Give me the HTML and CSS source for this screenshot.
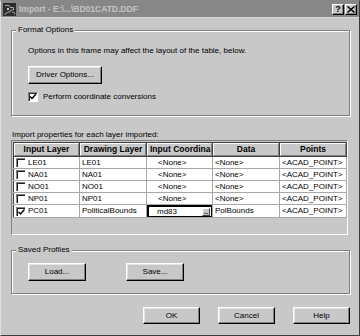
FILE: index.html
```html
<!DOCTYPE html>
<html>
<head>
<meta charset="utf-8">
<title>Import</title>
<link rel="stylesheet" href="styles.css">
</head>
<body>
<div class="dialog">
  <div class="titlebar">
    <svg class="app-icon" viewBox="0 0 13 13" width="13" height="13">
      <rect x="0" y="0" width="13" height="13" fill="#2e2e2e"/>
      <path d="M2 2.5h4l1 2h3.5v2.5H8l-1 2H4.5L3 11H1.5" fill="none" stroke="#a9a9a9" stroke-width="1"/>
      <path d="M9 9.5h2.5v2" fill="none" stroke="#8a8a8a" stroke-width="1"/>
      <rect x="4" y="5" width="2" height="2" fill="#cfcfcf"/>
    </svg>
    <span class="title">Import - E:\...\BD01CATD.DDF</span>
    <span class="tb-btns">
      <span class="tb-btn">?</span>
      <span class="tb-btn"><svg viewBox="0 0 8 7" width="8" height="7"><path d="M0.5 0.5l7 6M7.5 0.5l-7 6" stroke="#000" stroke-width="1.4"/></svg></span>
    </span>
  </div>

  <div class="content">
    <fieldset class="group format">
      <legend>Format Options</legend>
      <p class="hint">Options in this frame may affect the layout of the table, below.</p>
      <button class="btn driver">Driver Options...</button>
      <div class="check">
        <span class="cb cb-checked"><svg viewBox="0 0 8 8" width="8" height="8"><path d="M1 3.5l2 2 4-4.5" fill="none" stroke="#000" stroke-width="1.5"/></svg></span>
        <span>Perform coordinate conversions</span>
      </div>
    </fieldset>

    <p class="table-label">Import properties for each layer imported:</p>

    <div class="grid-panel">
      <table class="grid">
        <colgroup>
          <col class="c1"><col class="c2"><col class="c3"><col class="c4"><col class="c5">
        </colgroup>
        <thead>
          <tr>
            <th><div class="hd">Input Layer</div></th>
            <th><div class="hd">Drawing Layer</div></th>
            <th><div class="hd hd-left">Input Coordina</div></th>
            <th><div class="hd">Data</div></th>
            <th><div class="hd">Points</div></th>
          </tr>
        </thead>
        <tbody>
          <tr>
            <td><div class="layer"><span class="rcb"></span>LE01</div></td>
            <td>LE01</td>
            <td class="coord">&lt;None&gt;</td>
            <td>&lt;None&gt;</td>
            <td>&lt;ACAD_POINT&gt;</td>
          </tr>
          <tr>
            <td><div class="layer"><span class="rcb"></span>NA01</div></td>
            <td>NA01</td>
            <td class="coord">&lt;None&gt;</td>
            <td>&lt;None&gt;</td>
            <td>&lt;ACAD_POINT&gt;</td>
          </tr>
          <tr>
            <td><div class="layer"><span class="rcb"></span>NO01</div></td>
            <td>NO01</td>
            <td class="coord">&lt;None&gt;</td>
            <td>&lt;None&gt;</td>
            <td>&lt;ACAD_POINT&gt;</td>
          </tr>
          <tr>
            <td><div class="layer"><span class="rcb"></span>NP01</div></td>
            <td>NP01</td>
            <td class="coord">&lt;None&gt;</td>
            <td>&lt;None&gt;</td>
            <td>&lt;ACAD_POINT&gt;</td>
          </tr>
          <tr>
            <td><div class="layer"><span class="rcb"><svg viewBox="0 0 7 7" width="7" height="7"><path d="M0.5 3l2 2 4-4.5" fill="none" stroke="#000" stroke-width="1.4"/></svg></span>PC01</div></td>
            <td>PoliticalBounds</td>
            <td class="edit-cell"><div class="edit-box"><span>md83</span><span class="ellipsis">..</span></div></td>
            <td>PolBounds</td>
            <td>&lt;ACAD_POINT&gt;</td>
          </tr>
        </tbody>
      </table>
    </div>

    <fieldset class="group profiles">
      <legend>Saved Profiles</legend>
      <div class="profile-btns">
        <button class="btn pbtn">Load...</button>
        <button class="btn pbtn">Save...</button>
      </div>
    </fieldset>

    <div class="footer">
      <button class="btn fbtn">OK</button>
      <button class="btn fbtn">Cancel</button>
      <button class="btn fbtn">Help</button>
    </div>
  </div>
</div>
</body>
</html>
```

FILE: styles.css
```css
* { box-sizing: border-box; }
html, body { margin: 0; padding: 0; }
body {
  width: 360px;
  height: 336px;
  overflow: hidden;
  background: #c8c8c8;
  font-family: "Liberation Sans", Arial, sans-serif;
  font-size: 8px;
  line-height: 10px;
  color: #000;
}
.dialog {
  width: 360px;
  height: 336px;
  background: #c8c8c8;
  border: 1px solid;
  border-color: #878787 #3c3c3c #3c3c3c #dedede;
  display: flex;
  flex-direction: column;
}
.titlebar {
  height: 17px;
  flex: none;
  background: #878787;
  display: flex;
  align-items: center;
  padding: 0 2px 0 2px;
  border-bottom: 1px solid #d8d8d8;
}
.app-icon { flex: none; display: block; }
.title {
  margin-left: 3px;
  color: #c4c4c4;
  font-weight: bold;
  font-size: 8.5px;
  white-space: nowrap;
}
.tb-btns { margin-left: auto; display: flex; gap: 1px; }
.tb-btn {
  width: 12px;
  height: 11px;
  background: #c8c8c8;
  border: 1px solid;
  border-color: #fff #000 #000 #fff;
  box-shadow: inset -1px -1px 0 #808080;
  display: flex;
  align-items: center;
  justify-content: center;
  font-weight: bold;
  font-size: 9px;
  line-height: 9px;
}
.tb-btn svg { display: block; }

.content {
  padding: 0 9px 0 10px;
  display: flex;
  flex-direction: column;
}

.group {
  margin: 0;
  padding: 0;
  min-width: 0;
  border: 1px solid #808080;
  box-shadow: 1px 1px 0 #fff, inset 1px 1px 0 #fff;
}
.group legend {
  margin-left: 4px;
  padding: 0 2px;
  background: #c8c8c8;
  font-size: 8px;
  line-height: 10px;
}
.format { margin-top: 7px; padding-bottom: 13px; }
.hint { margin: 11px 0 0 16px; white-space: nowrap; }

.btn {
  font-family: "Liberation Sans", Arial, sans-serif;
  font-size: 8px;
  line-height: 10px;
  color: #000;
  background: #c8c8c8;
  border: 1px solid;
  border-color: #fff #000 #000 #fff;
  box-shadow: inset -1px -1px 0 #808080, inset 1px 1px 0 #e4e4e4;
  padding: 0;
  margin: 0;
  display: flex;
  align-items: center;
  justify-content: center;
}
.driver { margin: 10px 0 0 16px; width: 74px; height: 18px; }

.check {
  margin: 8px 0 0 16px;
  display: flex;
  align-items: center;
  gap: 5px;
  height: 10px;
}
.cb {
  width: 10px;
  height: 10px;
  background: #fff;
  border: 1px solid;
  border-color: #808080 #fff #fff #808080;
  box-shadow: inset 1px 1px 0 #303030;
  display: flex;
  align-items: center;
  justify-content: center;
}
.cb svg { display: block; }

.table-label { margin: 14px 0 0 1px; white-space: nowrap; }

.grid-panel {
  width: 337px;
  height: 95px;
  border: 1px solid;
  border-color: #808080 #fff #fff #808080;
  padding: 1px 0 0 1px;
  background: #c8c8c8;
}
.grid {
  border-collapse: collapse;
  table-layout: fixed;
  width: 333px;
}
.c1 { width: 66px; }
.c2 { width: 67px; }
.c3 { width: 66px; }
.c4 { width: 67px; }
.c5 { width: 67px; }
.grid th {
  padding: 0;
  height: 14px;
  border: 1px solid #404040;
  background: #c8c8c8;
}
.hd {
  height: 13px;
  border-top: 1px solid #fff;
  border-left: 1px solid #fff;
  border-bottom: 1px solid #808080;
  border-right: 1px solid #808080;
  font-weight: bold;
  font-size: 8.5px;
  line-height: 11px;
  text-align: center;
  white-space: nowrap;
  overflow: hidden;
}
.hd-left { text-align: left; padding-left: 2px; }
.grid td {
  height: 12px;
  padding: 0 2px;
  border: 1px solid #a8a8a8;
  background: #fff;
  white-space: nowrap;
  overflow: hidden;
  line-height: 10px;
}
.grid tbody tr:first-child td { border-top-color: #404040; }
.grid td:first-child { border-left-color: #404040; }
.layer { display: flex; align-items: center; gap: 3px; }
.rcb {
  width: 9px;
  height: 9px;
  flex: none;
  background: #fff;
  border-top: 1px solid #808080;
  border-left: 1px solid #808080;
  box-shadow: inset 1px 1px 0 #202020;
  display: flex;
  align-items: center;
  justify-content: center;
}
.rcb svg { display: block; margin: 1px 0 0 1px; }
.grid td.coord { padding-left: 11px; }
.grid td.edit-cell { padding: 0; }
.edit-box {
  height: 12px;
  border: 1px solid #000;
  border-top-width: 2px;
  border-left-width: 2px;
  background: #fff;
  display: flex;
  align-items: center;
  justify-content: space-between;
  padding: 0 1px 0 8px;
}
.ellipsis {
  width: 8px;
  height: 8px;
  background: #c8c8c8;
  border: 1px solid;
  border-color: #fff #404040 #404040 #fff;
  font-size: 7px;
  line-height: 5px;
  text-align: center;
  font-weight: bold;
}

.profiles { margin-top: 10px; padding-bottom: 12px; }
.profile-btns { display: flex; gap: 40px; margin: 8px 0 0 16px; }
.pbtn { width: 58px; height: 18px; }

.footer {
  margin-top: 13px;
  display: flex;
  justify-content: flex-end;
  gap: 18px;
}
.fbtn { width: 57px; height: 17px; }
```
